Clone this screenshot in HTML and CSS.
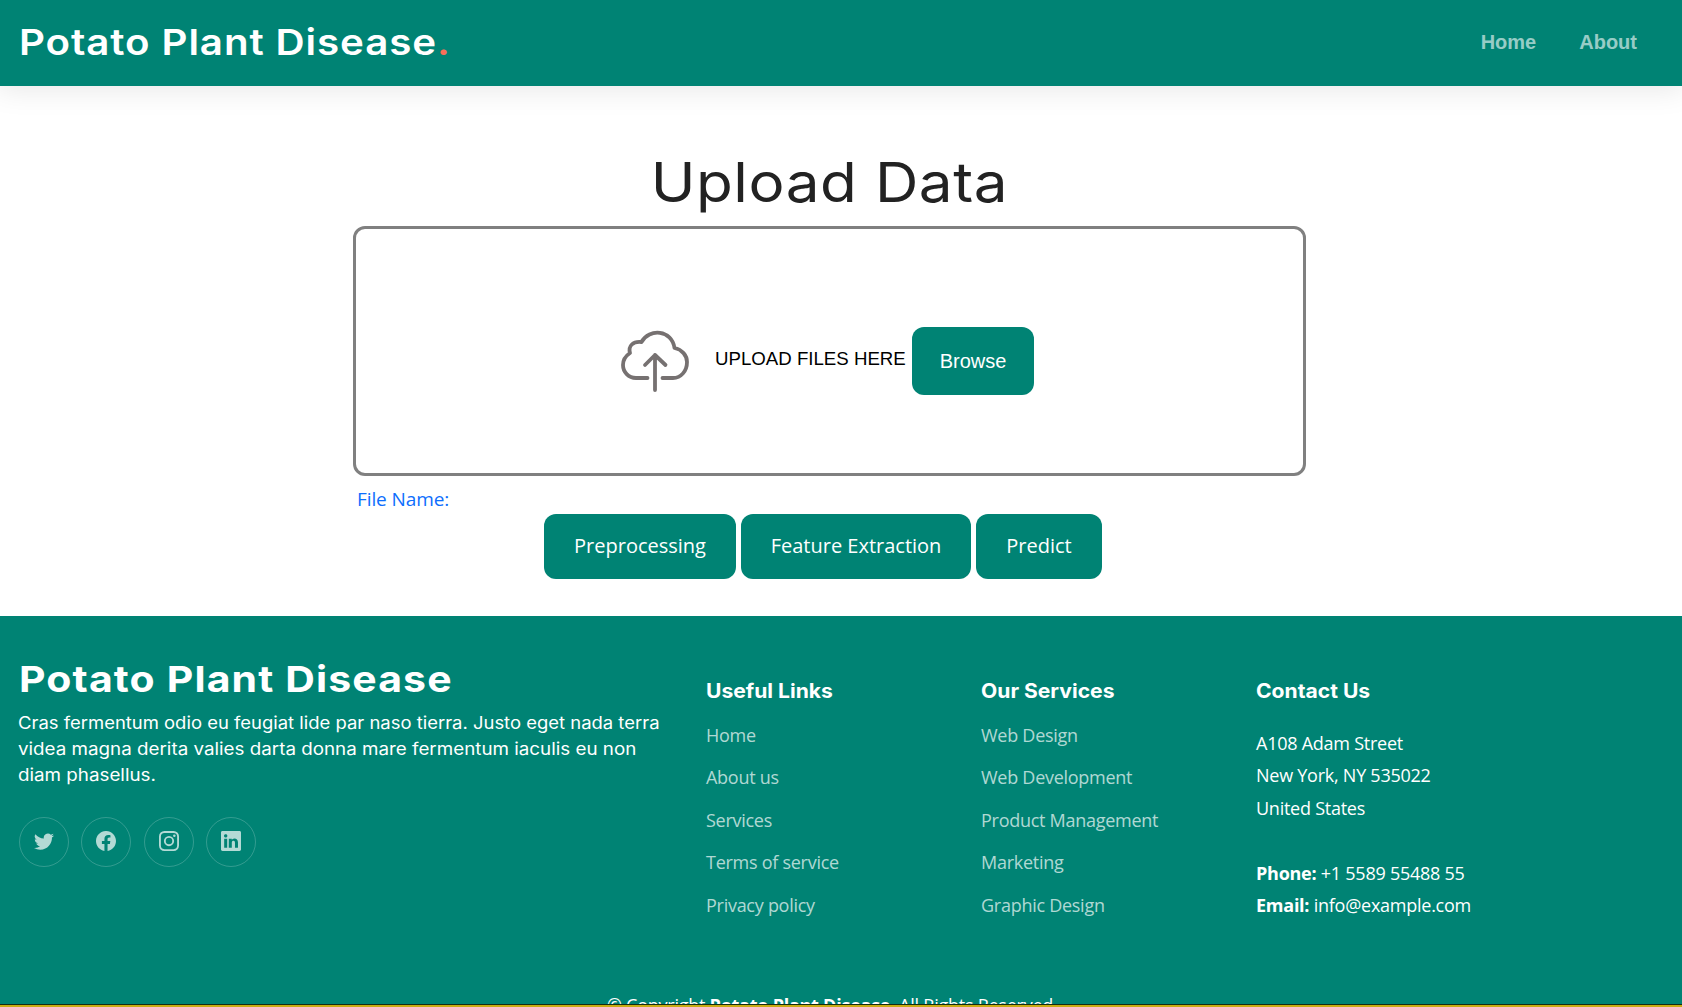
FILE: index.html
```html
<!DOCTYPE html>
<html lang="en">
<head>
<meta charset="utf-8">
<title>Potato Plant Disease</title>
<link rel="stylesheet" href="styles.css">
</head>
<body>
<header class="header">
  <a class="logo"><span>Potato Plant Disease</span><span class="dot">.</span></a>
  <nav class="nav"><a>Home</a><a>About</a></nav>
</header>
<main class="main">
  <h1 class="title"><span class="wide">Upload Data</span></h1>
  <section class="drop">
    <svg class="cloud" viewBox="0 0 68 62" fill="none" stroke="#767171" stroke-width="3.8" stroke-linecap="round" stroke-linejoin="round">
      <path d="M26.500 48H15C7.500 48 2 42 2 35C2 30 4.500 26 9 23C7 16 12 11 20.500 12C28-2 51-.5 53.500 18C61 19.500 66 25.500 66 32C66 41 60 48 52 48H41.500"/>
      <path d="M34 60V25M24 35L34 25L44.500 35"/>
    </svg>
    <span class="drop-label">UPLOAD FILES HERE</span>
    <button class="browse">Browse</button>
  </section>
  <p class="file-name">File Name:</p>
  <div class="actions">
    <button class="action pre">Preprocessing</button>
    <button class="action feat">Feature Extraction</button>
    <button class="action pred">Predict</button>
  </div>
</main>
<footer class="footer">
  <div class="columns">
    <section class="about">
      <h2 class="footer-logo">Potato Plant Disease</h2>
      <p class="blurb"><span class="line first">Cras fermentum odio eu feugiat lide par naso tierra. Justo eget nada terra</span><span class="line">videa magna derita valies darta donna mare fermentum iaculis eu non</span><span class="line">diam phasellus.</span></p>
      <div class="social">
        <a><svg viewBox="0 0 16 16"><path d="M5.026 15c6.038 0 9.341-5.003 9.341-9.334 0-.14 0-.282-.006-.422A6.685 6.685 0 0 0 16 3.542a6.658 6.658 0 0 1-1.889.518 3.301 3.301 0 0 0 1.447-1.817 6.533 6.533 0 0 1-2.087.793A3.286 3.286 0 0 0 7.875 6.030a9.325 9.325 0 0 1-6.767-3.429 3.289 3.289 0 0 0 1.018 4.382A3.323 3.323 0 0 1 .64 6.575v.045a3.288 3.288 0 0 0 2.632 3.218 3.203 3.203 0 0 1-.865.115 3.230 3.230 0 0 1-.614-.057 3.283 3.283 0 0 0 3.067 2.277A6.588 6.588 0 0 1 .78 13.580a6.320 6.320 0 0 1-.78-.045A9.344 9.344 0 0 0 5.026 15z"/></svg></a>
        <a><svg viewBox="0 0 16 16"><path d="M16 8.049c0-4.446-3.582-8.050-8-8.050C3.580 0-.002 3.603-.002 8.050c0 4.017 2.926 7.347 6.750 7.951v-5.625h-2.030V8.050H6.750V6.275c0-2.017 1.195-3.131 3.022-3.131.876 0 1.791.157 1.791.157v1.980h-1.009c-.993 0-1.303.621-1.303 1.258v1.510h2.218l-.354 2.326H9.250V16c3.824-.604 6.750-3.934 6.750-7.951z"/></svg></a>
        <a><svg viewBox="0 0 16 16"><rect x=".75" y=".75" width="14.500" height="14.500" rx="3.600" fill="none" stroke="currentColor" stroke-width="1.500"/><circle cx="8" cy="8" r="3.350" fill="none" stroke="currentColor" stroke-width="1.500"/><circle cx="12.270" cy="3.730" r="1"/></svg></a>
        <a><svg viewBox="0 0 16 16"><path d="M0 1.146C0 .513.526 0 1.175 0h13.650C15.474 0 16 .513 16 1.146v13.708c0 .633-.526 1.146-1.175 1.146H1.175C.526 16 0 15.487 0 14.854V1.146zm4.943 12.248V6.169H2.542v7.225h2.401zm-1.200-8.212c.837 0 1.358-.554 1.358-1.248-.015-.709-.520-1.248-1.342-1.248-.822 0-1.359.540-1.359 1.248 0 .694.521 1.248 1.327 1.248h.016zm4.908 8.212V9.359c0-.216.016-.432.080-.586.173-.431.568-.878 1.232-.878.869 0 1.216.662 1.216 1.634v3.865h2.401V9.250c0-2.220-1.184-3.252-2.764-3.252-1.274 0-1.845.700-2.165 1.193v.025h-.016l.016-.025V6.169h-2.400c.030.678 0 7.225 0 7.225h2.400z"/></svg></a>
      </div>
    </section>
    <section class="col">
      <h3>Useful Links</h3>
      <ul><li>Home</li><li>About us</li><li>Services</li><li>Terms of service</li><li>Privacy policy</li></ul>
    </section>
    <section class="col">
      <h3>Our Services</h3>
      <ul><li>Web Design</li><li>Web Development</li><li>Product Management</li><li>Marketing</li><li>Graphic Design</li></ul>
    </section>
    <section class="col contact">
      <h3>Contact Us</h3>
      <p>A108 Adam Street<br>New York, NY 535022<br>United States<br><br><strong>Phone:</strong> +1 5589 55488 55<br><strong>Email:</strong> info@example.com</p>
    </section>
  </div>
  <p class="copyright"><span>© Copyright <strong>Potato Plant Disease</strong>. All Rights Reserved</span></p>
</footer>
<div class="edge"></div>
</body>
</html>
```

FILE: styles.css
```css
* { box-sizing: border-box; }
body {
  margin: 0;
  height: 1007px;
  overflow: hidden;
  display: flex;
  flex-direction: column;
  background: #fff;
  color: #222;
  font-family: "Open Sans", sans-serif;
  white-space: nowrap;
}
h1, h2, h3, p, ul { margin: 0; padding: 0; }
ul { list-style: none; }
button { border: 0; color: #fff; background: #008374; border-radius: 12px; padding: 0; }

.header {
  flex: none;
  height: 86px;
  display: flex;
  align-items: center;
  justify-content: space-between;
  padding: 0 45px 2px 19px;
  background: #008374;
  box-shadow: 0 0 30px 3px rgba(0, 0, 0, .1);
}
.logo { color: #fff; font: 600 36px/44px Inter, sans-serif; letter-spacing: .8px; transform: scaleX(1.119); transform-origin: left; }
.dot { color: #f96f59; }
.nav { display: flex; gap: 43px; font: bold 20px/24px "Liberation Sans", Arial, sans-serif; color: rgba(255, 255, 255, .6); }

.main { flex: none; height: 530px; width: 953px; margin-left: 353px; padding-top: 60px; display: flex; flex-direction: column; }
.title { height: 80px; text-align: center; font: 400 55px/72px Inter, sans-serif; letter-spacing: .5px; }
.wide { display: inline-block; transform: scaleX(1.094); }
.drop { height: 250px; flex: none; border: 3px solid #808080; border-radius: 12px; display: flex; align-items: center; padding: 20px 0 0 264.500px; }
.cloud { width: 68px; height: 62px; flex: none; margin-right: 26.500px; margin-top: -1px; }
.drop-label { width: 197px; font: 18.670px/24px "Liberation Sans", Arial, sans-serif; color: #000; margin-top: -4px; }
.browse { width: 122px; height: 68px; font: 20px "Liberation Sans", Arial, sans-serif; }
.file-name { height: 38px; flex: none; padding: 8px 0 0 4px; font-size: 19px; line-height: 30px; color: #0d6efd; letter-spacing: -.1px; }
.actions { display: flex; gap: 5px; margin-left: 191px; }
.action { height: 65px; font: 20px "Open Sans", sans-serif; padding-bottom: 2px; }
.pre { width: 192px; }
.feat { width: 230px; }
.pred { width: 126px; }

.footer { flex: none; height: 388px; overflow: hidden; background: #008374; color: #fff; padding-top: 39px; }
.columns { display: grid; grid-template-columns: 687px 275px 275px 1fr; padding-left: 19px; height: 335px; }
.footer-logo { font: 700 36px/48px Inter, sans-serif; letter-spacing: 1px; transform: scaleX(1.138); transform-origin: left; }
.blurb { margin-top: 7px; margin-left: -1px; font: 17px/26px Inter, sans-serif; }
.line { display: block; transform: scaleX(1.105); transform-origin: left; }
.line.first { transform: scaleX(1.085); }
.social { display: flex; gap: 12.500px; margin-top: 29px; margin-left: -.2px; }
.social a { width: 50px; height: 50px; border: 1px solid rgba(255, 255, 255, .2); border-radius: 50%; display: grid; place-items: center; color: rgba(255, 255, 255, .7); padding-bottom: 2px; }
.social svg { width: 20px; height: 20px; fill: currentColor; }
.col h3 { margin-top: 24px; font: 700 20px/24px Inter, sans-serif; transform: scaleX(1.055); transform-origin: left; }
.col ul { margin-top: 10.500px; font-size: 18px; line-height: 42.500px; color: rgba(255, 255, 255, .7); letter-spacing: -.27px; }
.contact p { margin-top: 23.500px; font-size: 18px; line-height: 32.500px; letter-spacing: -.25px; }
.copyright { text-align: center; font-size: 18px; line-height: 24px; padding-right: 22px; margin-top: 3px; letter-spacing: -.25px; }
.edge { flex: none; height: 3px; background: #c9ac12; border-top: 1px solid #142d12; }
```
